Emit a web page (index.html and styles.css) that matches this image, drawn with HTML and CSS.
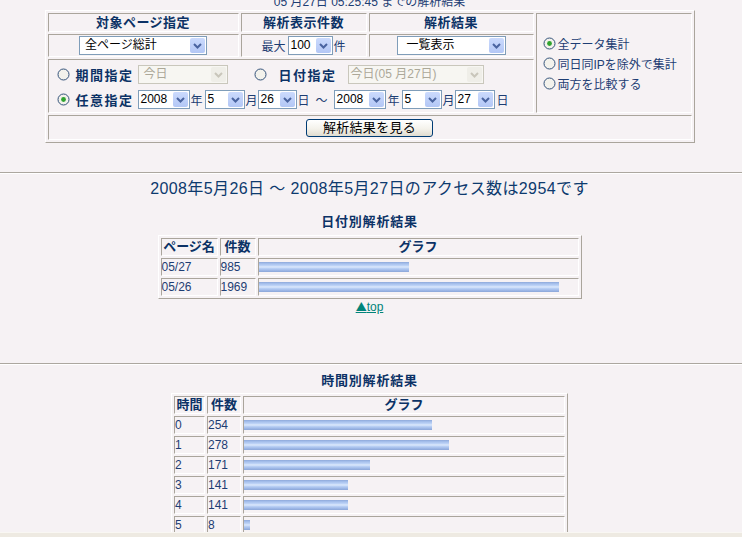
FILE: index.html
```html
<!DOCTYPE html>
<html lang="ja">
<head>
<meta charset="utf-8">
<title>アクセス解析結果</title>
<link rel="stylesheet" href="styles.css">
</head>
<body>
<div class="page">
  <p class="caption">05 月27日 05:25:45 までの解析結果</p>

  <form class="cond">
    <table class="ftable">
      <colgroup><col class="c1"><col class="c2"><col class="c3"><col class="c4"></colgroup>
      <tr class="r1">
        <th>対象ページ指定</th>
        <th>解析表示件数</th>
        <th>解析結果</th>
        <td rowspan="3" class="modes">
          <div class="opt"><svg class="rd" width="13" height="13" viewBox="0 0 13 13"><circle cx="6.5" cy="6.5" r="5.5" fill="#f3f2ec" stroke="#34527a"/><circle cx="6.5" cy="6.5" r="2.4" fill="#2fa32f"/></svg><span>全データ集計</span></div>
          <div class="opt"><svg class="rd" width="13" height="13" viewBox="0 0 13 13"><circle cx="6.5" cy="6.5" r="5.5" fill="#f3f2ec" stroke="#34527a"/></svg><span>同日同IPを除外で集計</span></div>
          <div class="opt"><svg class="rd" width="13" height="13" viewBox="0 0 13 13"><circle cx="6.5" cy="6.5" r="5.5" fill="#f3f2ec" stroke="#34527a"/></svg><span>両方を比較する</span></div>
        </td>
      </tr>
      <tr class="r2">
        <td class="ctr">
          <span class="sel w128"><span class="v p5">全ページ総計</span><span class="b"><svg width="9" height="6" viewBox="0 0 9 6"><path d="M1 1l3.5 3.5L8 1" fill="none" stroke="#4a64a0" stroke-width="2"/></svg></span></span>
        </td>
        <td class="ctr">
          <span class="unit">最大</span><span class="sel w45 ml2"><span class="v">100</span><span class="b"><svg width="9" height="6" viewBox="0 0 9 6"><path d="M1 1l3.5 3.5L8 1" fill="none" stroke="#4a64a0" stroke-width="2"/></svg></span></span><span class="unit ml1">件</span>
        </td>
        <td class="ctr">
          <span class="sel w109"><span class="v p9">一覧表示</span><span class="b"><svg width="9" height="6" viewBox="0 0 9 6"><path d="M1 1l3.5 3.5L8 1" fill="none" stroke="#4a64a0" stroke-width="2"/></svg></span></span>
        </td>
      </tr>
      <tr class="r3">
        <td colspan="3" class="range">
          <div class="line">
            <svg class="rd" width="13" height="13" viewBox="0 0 13 13"><circle cx="6.5" cy="6.5" r="5.5" fill="#f3f2ec" stroke="#34527a"/></svg>
            <span class="blab ml6">期間指定</span>
            <span class="sel dis w90 ml4"><span class="v p5">今日</span><span class="b"><svg width="9" height="6" viewBox="0 0 9 6"><path d="M1 1l3.5 3.5L8 1" fill="none" stroke="#c9c6bb" stroke-width="2"/></svg></span></span>
            <svg class="rd ml26" width="13" height="13" viewBox="0 0 13 13"><circle cx="6.5" cy="6.5" r="5.5" fill="#f3f2ec" stroke="#34527a"/></svg>
            <span class="blab ml12">日付指定</span>
            <span class="sel dis w136 ml11"><span class="v">今日(05 月27日)</span><span class="b"><svg width="9" height="6" viewBox="0 0 9 6"><path d="M1 1l3.5 3.5L8 1" fill="none" stroke="#c9c6bb" stroke-width="2"/></svg></span></span>
          </div>
          <div class="line">
            <svg class="rd" width="13" height="13" viewBox="0 0 13 13"><circle cx="6.5" cy="6.5" r="5.5" fill="#f3f2ec" stroke="#34527a"/><circle cx="6.5" cy="6.5" r="2.4" fill="#2fa32f"/></svg>
            <span class="blab ml6">任意指定</span>
            <span class="sel w52 ml4"><span class="v">2008</span><span class="b"><svg width="9" height="6" viewBox="0 0 9 6"><path d="M1 1l3.5 3.5L8 1" fill="none" stroke="#4a64a0" stroke-width="2"/></svg></span></span>
            <span class="unit ml1">年</span>
            <span class="sel w40 ml2"><span class="v">5</span><span class="b"><svg width="9" height="6" viewBox="0 0 9 6"><path d="M1 1l3.5 3.5L8 1" fill="none" stroke="#4a64a0" stroke-width="2"/></svg></span></span>
            <span class="unit ml1">月</span>
            <span class="sel w39"><span class="v">26</span><span class="b"><svg width="9" height="6" viewBox="0 0 9 6"><path d="M1 1l3.5 3.5L8 1" fill="none" stroke="#4a64a0" stroke-width="2"/></svg></span></span>
            <span class="unit ml1">日</span>
            <span class="unit ml6">～</span>
            <span class="sel w52 ml6"><span class="v">2008</span><span class="b"><svg width="9" height="6" viewBox="0 0 9 6"><path d="M1 1l3.5 3.5L8 1" fill="none" stroke="#4a64a0" stroke-width="2"/></svg></span></span>
            <span class="unit ml2">年</span>
            <span class="sel w40 ml2"><span class="v">5</span><span class="b"><svg width="9" height="6" viewBox="0 0 9 6"><path d="M1 1l3.5 3.5L8 1" fill="none" stroke="#4a64a0" stroke-width="2"/></svg></span></span>
            <span class="unit ml1">月</span>
            <span class="sel w40"><span class="v">27</span><span class="b"><svg width="9" height="6" viewBox="0 0 9 6"><path d="M1 1l3.5 3.5L8 1" fill="none" stroke="#4a64a0" stroke-width="2"/></svg></span></span>
            <span class="unit ml2">日</span>
          </div>
        </td>
      </tr>
      <tr class="r4">
        <td colspan="4" class="ctr"><button type="button" class="go">解析結果を見る</button></td>
      </tr>
    </table>
  </form>

  <hr class="rule rule1">

  <h1 class="total">2008年5月26日 ～ 2008年5月27日のアクセス数は2954です</h1>

  <h2 class="sub sub1">日付別解析結果</h2>
  <table class="dtable t1">
    <colgroup><col class="a1"><col class="a2"><col class="a3"></colgroup>
    <tr><th>ページ名</th><th>件数</th><th>グラフ</th></tr>
    <tr><td>05/27</td><td>985</td><td><span class="bar" style="width:150px"></span></td></tr>
    <tr><td>05/26</td><td>1969</td><td><span class="bar" style="width:300px"></span></td></tr>
  </table>
  <p class="toplink"><a href="#"><span class="tri">▲</span>top</a></p>

  <hr class="rule rule2">

  <h2 class="sub sub2">時間別解析結果</h2>
  <table class="dtable t2">
    <colgroup><col class="b1"><col class="b2"><col class="b3"></colgroup>
    <tr><th>時間</th><th>件数</th><th>グラフ</th></tr>
    <tr><td>0</td><td>254</td><td><span class="bar" style="width:188px"></span></td></tr>
    <tr><td>1</td><td>278</td><td><span class="bar" style="width:205px"></span></td></tr>
    <tr><td>2</td><td>171</td><td><span class="bar" style="width:126px"></span></td></tr>
    <tr><td>3</td><td>141</td><td><span class="bar" style="width:104px"></span></td></tr>
    <tr><td>4</td><td>141</td><td><span class="bar" style="width:104px"></span></td></tr>
    <tr><td>5</td><td>8</td><td><span class="bar" style="width:6px"></span></td></tr>
  </table>
</div>
<div class="frame-edge"></div>
</body>
</html>
```

FILE: styles.css
```css
* { box-sizing: border-box; }

html, body {
  margin: 0;
  padding: 0;
}

html { overflow: hidden; }

body {
  background: #f6f2f4;
  font-family: "Liberation Sans", "Noto Sans CJK JP", sans-serif;
  font-size: 12px;
  color: #1d3d73;
}

.page {
  padding-right: 3px;
}

.caption {
  margin: -5px 0 1px;
  height: 14px;
  line-height: 14px;
  text-align: center;
  color: #1d3d73;
}

.cond { margin: 0; }

/* ---------- condition form table ---------- */
.ftable {
  width: 650px;
  margin: 0 auto;
  table-layout: fixed;
  border-collapse: separate;
  border-spacing: 2px;
  border: 1px solid;
  border-color: #ffffff #aaa59c #aaa59c #ffffff;
}

.ftable .c1 { width: 191px; }
.ftable .c2 { width: 126px; }
.ftable .c3 { width: 165px; }
.ftable .c4 { width: 156px; }

.ftable th,
.ftable td,
.dtable th,
.dtable td {
  border: 1px solid;
  border-color: #aaa59c #ffffff #ffffff #aaa59c;
  padding: 0;
}

.ftable .r1 { height: 19px; }
.ftable .r2 { height: 23px; }
.ftable .r3 { height: 54px; }
.ftable .r4 { height: 25px; }

.ftable th {
  font-size: 13px;
  font-weight: bold;
  color: #0c3266;
  letter-spacing: 0.5px;
  line-height: 17px;
  text-align: center;
}

.ctr {
  text-align: center;
  white-space: nowrap;
}

.modes {
  vertical-align: middle;
  padding-left: 6px !important;
}

.opt {
  display: flex;
  align-items: center;
  height: 20px;
  gap: 2px;
  color: #1d3d73;
  white-space: nowrap;
}

.rd { display: block; flex: none; }

.range {
  padding: 2px 0 0 8px !important;
  vertical-align: top;
}

.line {
  display: flex;
  align-items: center;
  height: 25px;
  white-space: nowrap;
}

.blab {
  font-size: 13px;
  font-weight: bold;
  color: #0c3266;
  letter-spacing: 1.5px;
}

.unit {
  color: #1d3d73;
  vertical-align: middle;
}

/* fake select boxes */
.sel {
  display: inline-flex;
  height: 19px;
  border: 1px solid #7f9db9;
  background: #ffffff;
  vertical-align: middle;
  text-align: left;
  flex: none;
}

.sel .v {
  flex: 1;
  padding-left: 2px;
  line-height: 17px;
  font-size: 12px;
  color: #000000;
  white-space: nowrap;
  overflow: hidden;
}

.sel .v.p5 { padding-left: 5px; }
.sel .v.p9 { padding-left: 9px; }

.sel .b {
  width: 15px;
  margin: 1px;
  border-radius: 2px;
  background: linear-gradient(#cbdafd, #b3c7f5);
  display: flex;
  align-items: center;
  justify-content: center;
}

.sel.dis {
  border-color: #c9c7bc;
  background: #f7f6f2;
}

.sel.dis .v { color: #aca899; }

.sel.dis .b { background: #efeee8; }

.w39 { width: 39px; }
.w40 { width: 40px; }
.w45 { width: 45px; }
.w52 { width: 52px; }
.w90 { width: 90px; }
.w109 { width: 109px; }
.w128 { width: 128px; }
.w136 { width: 136px; }

.ml1 { margin-left: 1px; }
.ml2 { margin-left: 2px; }
.ml4 { margin-left: 4px; }
.ml6 { margin-left: 6px; }
.ml11 { margin-left: 11px; }
.ml12 { margin-left: 12px; }
.ml26 { margin-left: 26px; }

.go {
  width: 127px;
  height: 18px;
  padding: 0;
  border: 1px solid #003c74;
  border-radius: 3px;
  background: linear-gradient(#ffffff, #f4f2eb 55%, #e0dcd0);
  font-family: "Liberation Sans", "Noto Sans CJK JP", sans-serif;
  font-size: 13px;
  line-height: 16px;
  letter-spacing: 0.3px;
  color: #000000;
  vertical-align: middle;
}

/* ---------- results ---------- */
.rule {
  height: 0;
  border: 0;
  border-top: 1px solid #aca79f;
  border-bottom: 1px solid #ffffff;
  margin: 0 -3px 0 0;
}

.rule1 { margin-top: 29px; }
.rule2 { margin-top: 49px; }

.total {
  margin: 5px 0 0;
  font-size: 16px;
  font-weight: normal;
  line-height: 20px;
  letter-spacing: 0.4px;
  text-align: center;
  color: #0d3a6e;
}

.sub {
  margin: 0;
  font-size: 13px;
  font-weight: bold;
  line-height: 16px;
  letter-spacing: 0.8px;
  text-align: center;
  color: #0c3266;
}

.sub1 { margin-top: 15px; margin-bottom: 5px; }
.sub2 { margin-top: 8px; margin-bottom: 4px; }

.dtable {
  margin: 0 auto;
  table-layout: fixed;
  border-collapse: separate;
  border-spacing: 2px;
  border: 1px solid;
  border-color: #ffffff #aaa59c #aaa59c #ffffff;
}

.t1 { width: 424px; }
.t1 .a1 { width: 57px; }
.t1 .a2 { width: 36px; }
.t1 .a3 { width: 321px; }

.t2 { width: 397px; }
.t2 .b1 { width: 31px; }
.t2 .b2 { width: 34px; }
.t2 .b3 { width: 322px; }

.dtable tr { height: 18px; }

.dtable th {
  font-size: 13px;
  font-weight: bold;
  line-height: 16px;
  text-align: center;
  color: #0c3266;
  white-space: nowrap;
}

.dtable td {
  padding: 0;
  line-height: 16px;
  color: #1d3d73;
  white-space: nowrap;
}

.bar {
  display: block;
  height: 10px;
  background: linear-gradient(to bottom,
    #8ea9da 0%, #a3bdea 15%, #bcd2f6 35%, #dde9fc 50%,
    #bcd2f6 62%, #a0bae8 82%, #8ba6d8 100%);
}

.toplink {
  margin: 0;
  line-height: 14px;
  text-align: center;
}

.toplink a {
  color: #00847a;
  text-decoration: underline;
}

.tri {
  font-family: "Noto Sans CJK JP", sans-serif;
  font-size: 11px;
}

.frame-edge {
  position: fixed;
  left: 0;
  right: 0;
  bottom: 0;
  height: 5px;
  background: #eeeae2;
  border-top: 1px solid #f9f7f3;
}
```
